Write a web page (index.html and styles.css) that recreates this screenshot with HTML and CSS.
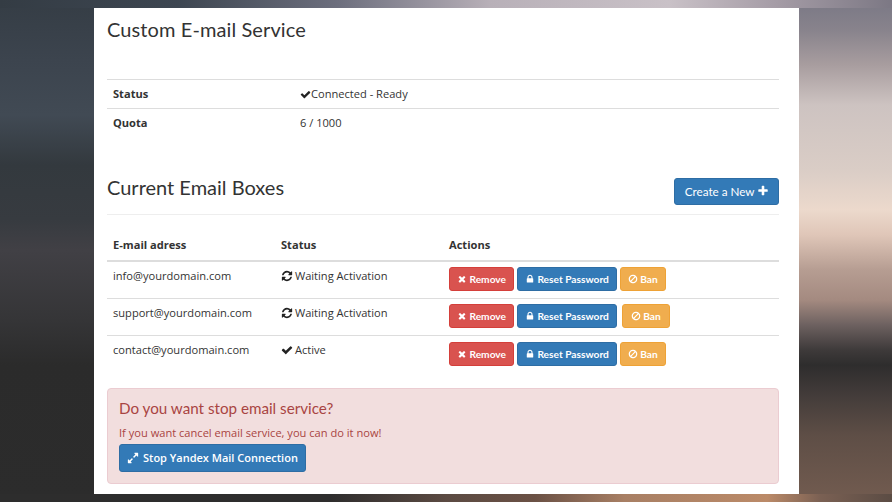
FILE: index.html
```html
<!DOCTYPE html>
<html lang="en">
<head>
    <meta charset="UTF-8">
    <title>Custom E-mail Service</title>
    <link rel="stylesheet" href="styles.css">
</head>
<body>
    <svg class="icon-defs" xmlns="http://www.w3.org/2000/svg">
        <symbol id="i-check" viewBox="0 0 1792 1792"><path d="M1671 566q0 40-28 68l-724 724-136 136q-28 28-68 28t-68-28l-136-136-362-362q-28-28-28-68t28-68l136-136q28-28 68-28t68 28l294 295 656-657q28-28 68-28t68 28l136 136q28 28 28 68z"/></symbol>
        <symbol id="i-times" viewBox="0 0 1792 1792"><path d="M1490 1322q0 40-28 68l-136 136q-28 28-68 28t-68-28l-294-294-294 294q-28 28-68 28t-68-28l-136-136q-28-28-28-68t28-68l294-294-294-294q-28-28-28-68t28-68l136-136q28-28 68-28t68 28l294 294 294-294q28-28 68-28t68 28l136 136q28 28 28 68t-28 68l-294 294 294 294q28 28 28 68z"/></symbol>
        <symbol id="i-plus" viewBox="0 0 1792 1792"><path d="M1600 736v192q0 40-28 68t-68 28h-416v416q0 40-28 68t-68 28h-192q-40 0-68-28t-28-68v-416h-416q-40 0-68-28t-28-68v-192q0-40 28-68t68-28h416v-416q0-40 28-68t68-28h192q40 0 68 28t28 68v416h416q40 0 68 28t28 68z"/></symbol>
        <symbol id="i-lock" viewBox="0 0 1792 1792"><path d="M640 768h512v-192q0-106-75-181t-181-75-181 75-75 181v192zm832 96v576q0 40-28 68t-68 28h-960q-40 0-68-28t-28-68v-576q0-40 28-68t68-28h32v-192q0-184 132-316t316-132 316 132 132 316v192h32q40 0 68 28t28 68z"/></symbol>
        <symbol id="i-ban" viewBox="0 0 1792 1792"><path d="M1440 893q0-161-87-295l-754 753q137 89 297 89 111 0 211.5-43.5t173.5-116.5 116-174.5 43-212.5zm-999 299l755-754q-135-91-300-91-148 0-273 73t-198 199-73 274q0 162 89 299zm1223-299q0 157-61 300t-163.5 246-245 164-298.5 61-298.5-61-245-164-163.5-246-61-300 61-299.5 163.5-245.5 245-164 298.5-61 298.5 61 245 164 163.5 245.5 61 299.5z"/></symbol>
        <symbol id="i-refresh" viewBox="0 0 1792 1792"><path d="M1639 1056q0 5-1 7-64 268-268 434.5t-478 166.5q-146 0-282.5-55t-243.5-157l-129 129q-19 19-45 19t-45-19-19-45v-448q0-26 19-45t45-19h448q26 0 45 19t19 45-19 45l-137 137q71 66 161 102t187 36q134 0 250-65t186-179q11-17 53-117 8-23 30-23h192q13 0 22.5 9.5t9.5 22.5zm25-800v448q0 26-19 45t-45 19h-448q-26 0-45-19t-19-45 19-45l138-138q-148-137-349-137-134 0-250 65t-186 179q-11 17-53 117-8 23-30 23h-199q-13 0-22.5-9.5t-9.5-22.5v-7q65-268 270-434.5t480-166.5q146 0 284 55.5t245 156.5l130-129q19-19 45-19t45 19 19 45z"/></symbol>
        <symbol id="i-expand" viewBox="0 0 1792 1792"><path d="M883 1056q0 13-10 23l-332 332 144 144q19 19 19 45t-19 45-45 19h-448q-26 0-45-19t-19-45v-448q0-26 19-45t45-19 45 19l144 144 332-332q10-10 23-10t23 10l114 114q10 10 10 23zm781-864v448q0 26-19 45t-45 19-45-19l-144-144-332 332q-10 10-23 10t-23-10l-114-114q-10-10-10-23t10-23l332-332-144-144q-19-19-19-45t19-45 45-19h448q26 0 45 19t19 45z"/></symbol>
    </svg>

    <div class="card">
        <h2 class="service-title">Custom E-mail Service</h2>

        <table class="table info-table">
            <tr>
                <th>Status</th>
                <td><svg class="icon icon-status"><use href="#i-check"/></svg>Connected - Ready</td>
            </tr>
            <tr>
                <th>Quota</th>
                <td>6 / 1000</td>
            </tr>
        </table>

        <div class="boxes-header">
            <h2>Current Email Boxes</h2>
            <a class="btn btn-blue btn-create">Create a New <svg class="icon icon-plus"><use href="#i-plus"/></svg></a>
        </div>

        <table class="table boxes-table">
            <tr>
                <th>E-mail adress</th>
                <th>Status</th>
                <th>Actions</th>
            </tr>
            <tr>
                <td>info@yourdomain.com</td>
                <td><svg class="icon icon-state"><use href="#i-refresh"/></svg> Waiting Activation</td>
                <td class="actions">
                    <a class="btn btn-red btn-sm"><svg class="icon"><use href="#i-times"/></svg> Remove</a>
                    <a class="btn btn-blue btn-sm"><svg class="icon"><use href="#i-lock"/></svg> Reset Password</a>
                    <a class="btn btn-orange btn-sm"><svg class="icon"><use href="#i-ban"/></svg> Ban</a>
                </td>
            </tr>
            <tr>
                <td>support@yourdomain.com</td>
                <td><svg class="icon icon-state"><use href="#i-refresh"/></svg> Waiting Activation</td>
                <td class="actions">
                    <a class="btn btn-red btn-sm"><svg class="icon"><use href="#i-times"/></svg> Remove</a>
                    <a class="btn btn-blue btn-sm"><svg class="icon"><use href="#i-lock"/></svg> Reset Password</a>
                    <a class="btn btn-orange btn-sm btn-wide"><svg class="icon"><use href="#i-ban"/></svg> Ban</a>
                </td>
            </tr>
            <tr>
                <td>contact@yourdomain.com</td>
                <td><svg class="icon icon-state"><use href="#i-check"/></svg> Active</td>
                <td class="actions">
                    <a class="btn btn-red btn-sm"><svg class="icon"><use href="#i-times"/></svg> Remove</a>
                    <a class="btn btn-blue btn-sm"><svg class="icon"><use href="#i-lock"/></svg> Reset Password</a>
                    <a class="btn btn-orange btn-sm"><svg class="icon"><use href="#i-ban"/></svg> Ban</a>
                </td>
            </tr>
        </table>

        <div class="alert">
            <h4>Do you want stop email service?</h4>
            <p>If you want cancel email service, you can do it now!</p>
            <a class="btn btn-blue btn-stop"><svg class="icon"><use href="#i-expand"/></svg> Stop Yandex Mail Connection</a>
        </div>
    </div>
</body>
</html>
```

FILE: styles.css
```css
html, body {
    margin: 0;
    height: 502px;
    overflow: hidden;
}

body {
    box-sizing: border-box;
    padding: 8px 93px 8px 94px;
    font-family: "Open Sans", sans-serif;
    font-size: 11.1px;
    color: #333;
    background-color: #2d2d2d;
    background-repeat: no-repeat;
    background-size: 892px 8px, 892px 8px, 94px 502px, 93px 502px;
    background-position: 0 0, 0 100%, 0 0, 100% 0;
    background-image:
        linear-gradient(90deg, #343c44 0, #3d4651 20%, #6d6f7e 38%, #b8b0b8 55%, #c9c1c7 75%, #a59ca6 87%, #7c7884 100%),
        linear-gradient(90deg, #2d2d2d 0, #2e2d2d 37%, #5b4a42 50%, #6b5145 60%, #a87f64 70%, #bb8a68 86%, #7a6053 92%, #5b4c44 100%),
        linear-gradient(180deg, #353d45 0, #3c444e 60px, #414a54 115px, #33393e 165px, #373b40 220px, #414045 250px, #353537 320px, #2b2b2b 365px, #2c2c2c 502px),
        linear-gradient(180deg, #7a7885 0, #88838c 30px, #a89d9f 65px, #cdc3c1 105px, #dacdc6 170px, #ecd9cc 210px, #dfc6b8 235px, #b69d92 270px, #a48a80 300px, #6d6160 325px, #3e3a3a 350px, #2e2d2d 365px, #433c3a 395px, #5e4e46 435px, #735c50 502px);
}

.icon-defs {
    display: none;
}

.card {
    box-sizing: border-box;
    height: 486px;
    padding: 9px 20px 0 13px;
    background: #fff;
}

h2 {
    margin: 0;
    font-family: Lato, sans-serif;
    font-size: 20px;
    font-weight: 400;
    line-height: 24px;
    color: #333;
}

.service-title {
    margin-bottom: 38px;
    letter-spacing: 0.1px;
}

.table {
    width: 100%;
    border-collapse: collapse;
    table-layout: fixed;
}

.table th,
.table td {
    padding: 6px;
    text-align: left;
    line-height: 16px;
    vertical-align: top;
}

.table th {
    font-weight: 700;
}

.info-table th,
.info-table td {
    border-top: 1px solid #ddd;
}

.info-table th {
    width: 175px;
}

.boxes-header {
    display: flex;
    align-items: flex-start;
    justify-content: space-between;
    margin-top: 41px;
    padding-bottom: 9px;
    border-bottom: 1px solid #eee;
}

.boxes-header h2 {
    margin-top: -1px;
    line-height: 20px;
}

.boxes-table {
    margin-top: 15px;
}

.boxes-table th {
    width: 156px;
    border-bottom: 2px solid #ddd;
    padding: 7px 6px 7px;
}

.boxes-table th:last-child {
    width: auto;
}

.boxes-table tr + tr {
    height: 37px;
}

.boxes-table td {
    border-top: 1px solid #ddd;
}

.boxes-table tr:nth-child(2) td {
    border-top: 0;
}

.table .actions {
    padding-top: 5px;
    padding-bottom: 0;
    white-space: nowrap;
}

.boxes-table tr:last-child .actions {
    padding-top: 6px;
}

.btn {
    display: inline-flex;
    align-items: center;
    justify-content: center;
    box-sizing: border-box;
    border: 1px solid;
    border-radius: 3px;
    color: #fff;
    white-space: pre;
}

.btn-blue {
    background: #337ab7;
    border-color: #2e6da4;
}

.btn-red {
    background: #d9534f;
    border-color: #d43f3a;
}

.btn-orange {
    background: #f0ad4e;
    border-color: #eea236;
}

.btn-sm {
    height: 24px;
    padding: 0 7px;
    font-family: Lato, sans-serif;
    font-size: 10.2px;
    font-weight: 700;
    vertical-align: top;
}

.btn-wide {
    margin-left: 2px;
    padding: 0 8px;
}

.btn-create {
    width: 105px;
    height: 27px;
    padding: 0 0 2px 1px;
    font-family: Lato, sans-serif;
    font-size: 11.7px;
}

.btn-stop {
    width: 187px;
    height: 28px;
    padding-bottom: 1px;
    font-size: 11px;
    font-weight: 600;
}

.icon {
    display: inline-block;
    width: 10px;
    height: 10px;
    fill: currentColor;
    flex: none;
}

.icon-status {
    width: 11px;
    height: 11px;
    vertical-align: -2px;
    fill: #222;
}

.icon-state {
    width: 12px;
    height: 12px;
    margin-right: -1px;
    vertical-align: -2px;
    fill: #222;
}

.icon-plus {
    width: 12px;
    height: 12px;
}

.btn-stop .icon {
    width: 12px;
    height: 12px;
    margin-right: 1px;
}

.alert {
    box-sizing: border-box;
    height: 96px;
    margin-top: 16px;
    padding: 9px 11px;
    color: #a94442;
    background: #f2dede;
    border: 1px solid #ebccd1;
    border-radius: 4px;
}

.alert h4 {
    margin: 0 0 6px;
    font-family: Lato, sans-serif;
    font-size: 15.2px;
    font-weight: 400;
    line-height: 20px;
}

.alert p {
    margin: 0 0 3px;
    font-size: 11.1px;
    line-height: 17px;
}
```
